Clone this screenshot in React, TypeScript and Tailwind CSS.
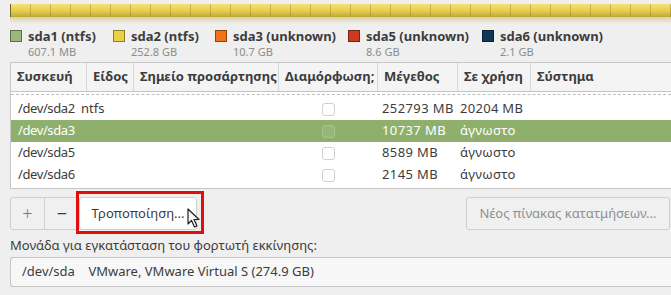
import React from 'react';

const legend = [
  { name: 'sda1 (ntfs)', size: '607.1 MB', color: 'bg-[#9bb77c]', w: 'w-[103px]' },
  { name: 'sda2 (ntfs)', size: '252.8 GB', color: 'bg-[#ecd043]', w: 'w-[102px]' },
  { name: 'sda3 (unknown)', size: '10.7 GB', color: 'bg-[#f07117]', w: 'w-[133px]' },
  { name: 'sda5 (unknown)', size: '8.6 GB', color: 'bg-[#cc3a21]', w: 'w-[134px]' },
  { name: 'sda6 (unknown)', size: '2.1 GB', color: 'bg-[#0e3954]', w: 'w-[134px]' },
];

const rows = [
  { dev: '/dev/sda2', type: 'ntfs', size: '252793 MB', used: '20204 MB' },
  { dev: '/dev/sda3', type: '', size: '10737 MB', used: 'άγνωστο', sel: true },
  { dev: '/dev/sda5', type: '', size: '8589 MB', used: 'άγνωστο' },
  { dev: '/dev/sda6', type: '', size: '2145 MB', used: 'άγνωστο' },
];

// column widths follow the header separators
const cols = ['w-[76px]', 'w-[47px]', 'w-[145px]', 'w-[99px]', 'w-[80px]', 'w-[73px]', 'flex-1'];
const headers = ['Συσκευή', 'Είδος', 'Σημείο προσάρτησης', 'Διαμόρφωση;', 'Μέγεθος', 'Σε χρήση', 'Σύστημα'];

export default function App() {
  return (
    <div
      className="w-[671px] h-[295px] overflow-hidden bg-[#efefef] text-[#3c3c3c] text-[13px] pl-[10px]"
      style={{ fontFamily: '"Noto Sans", "Open Sans", sans-serif' }}
    >
      {/* Disk usage bar */}
      <div className="pt-[4px]">
        <div className="h-[13px] border-l border-[#6d6330] bg-[linear-gradient(to_bottom,#f3e27a,#e6cc4a_55%,#bfa736)] relative">
          <div className="absolute inset-0 bg-[repeating-linear-gradient(to_right,transparent_0px,transparent_19px,rgba(150,130,50,0.45)_19px,rgba(150,130,50,0.45)_20px)]" />
        </div>
        <div className="h-[7px] bg-[linear-gradient(to_bottom,#d9d1a8,#efefef)]" />
      </div>

      {/* Legend */}
      <div className="flex mt-[4px] h-[34px]">
        {legend.map((l) => (
          <div key={l.name} className={`${l.w} shrink-0`}>
            <div className="flex items-center gap-[6px]">
              <span className={`w-[12px] h-[12px] border border-black/40 ${l.color}`} />
              <span className="font-bold text-[13px] leading-[16px] text-[#3c3c3c]">{l.name}</span>
            </div>
            <div className="pl-[18px] text-[11px] leading-[15px] text-[#8c8c8c]">{l.size}</div>
          </div>
        ))}
      </div>

      {/* Partition table */}
      <div className="border border-r-0 border-[#c6c6c6] bg-white">
        <div className="flex h-[29px] bg-[#f4f4f4] border-b border-[#c6c6c6] font-bold text-[#3c3c3c]">
          {headers.map((h, i) => (
            <div
              key={h}
              className={`${cols[i]} flex items-center px-[6px] whitespace-nowrap overflow-hidden ${i < 6 ? 'border-r border-[#d6d6d6]' : ''}`}
            >
              {h}
            </div>
          ))}
        </div>

        {/* row scrolled off under the header */}
        <div className="h-[6px] relative">
          <div className="h-[3px] overflow-hidden border-b border-dashed border-[#bdbdbd]" aria-hidden="true">
            <div className="flex -mt-[15px] h-[18px] items-center text-[#3c3c3c]">
              <div className="w-[70px] pl-[7px] tracking-[-0.4px]">/dev/sda1</div>
              <div>ntfs</div>
            </div>
          </div>
        </div>

        {rows.map((r) => (
          <div
            key={r.dev}
            className={`flex h-[22px] items-center whitespace-nowrap ${r.sel ? 'bg-[#8eb06c] text-white' : 'text-[#3c3c3c]'}`}
          >
            <div className="w-[70px] pl-[7px] tracking-[-0.4px]">{r.dev}</div>
            <div className="w-[53px]">{r.type}</div>
            <div className="w-[145px]" />
            <div className="w-[99px] flex justify-center">
              <span
                className={`w-[13px] h-[13px] rounded-[3px] border ${r.sel ? 'border-[#a9c48e] bg-[#97b777]' : 'border-[#d0d0d0] bg-white'}`}
              />
            </div>
            <div className="w-[80px] pl-[4px] tracking-[0.4px]">{r.size}</div>
            <div className="w-[73px] pl-[2px] tracking-[0.3px]">{r.used}</div>
            <div className="flex-1" />
          </div>
        ))}
        <div className="h-[2px]" />
      </div>

      {/* Buttons */}
      <div className="flex items-center mt-[8px] pr-[1px]">
        <div className="flex h-[33px] border border-[#cfcfcf] rounded-[3px] bg-[#f0f0f0]">
          <div className="w-[34px] flex items-center justify-center border-r border-[#cfcfcf] text-[#7a7a7a] text-[18px] font-light">
            +
          </div>
          <div className="w-[34px] flex items-center justify-center text-[#3c3c3c] text-[18px]">−</div>
        </div>
        <div className="relative -ml-[1px]">
          <div className="h-[33px] w-[118px] bg-white border border-[#cfcfcf] rounded-[3px] flex items-center justify-center text-[#3c3c3c]">
            Τροποποίηση...
          </div>
          <div className="absolute -left-[3px] -top-[6px] w-[128px] h-[43px] border-[3px] border-[#e20d0d] pointer-events-none" />
          <svg className="absolute left-[108px] top-[11px]" width="14" height="21" viewBox="0 0 14 21">
            <path d="M1 1 L1 16 L4.5 12.5 L7.5 19 L10 18 L7 11.5 L12 11.5 Z" fill="#f8f8f8" stroke="#222" strokeWidth="1.2" strokeLinejoin="round" />
          </svg>
        </div>
        <div className="ml-auto h-[33px] w-[204px] border border-[#cfcfcf] rounded-[3px] bg-[#f0f0f0] flex items-center justify-center text-[#8f8f8f]">
          Νέος πίνακας κατατμήσεων...
        </div>
      </div>

      {/* Boot loader device */}
      <div className="mt-[6px] leading-[18px] text-[#3c3c3c]">Μονάδα για εγκατάσταση του φορτωτή εκκίνησης:</div>
      <div className="mt-[3px] h-[30px] border border-r-0 border-[#c6c6c6] rounded-l-[3px] bg-[#f7f7f7] flex items-center pl-[11px] text-[#3c3c3c] whitespace-pre">
        {'/dev/sda    VMware, VMware Virtual S (274.9 GB)'}
      </div>
    </div>
  );
}
